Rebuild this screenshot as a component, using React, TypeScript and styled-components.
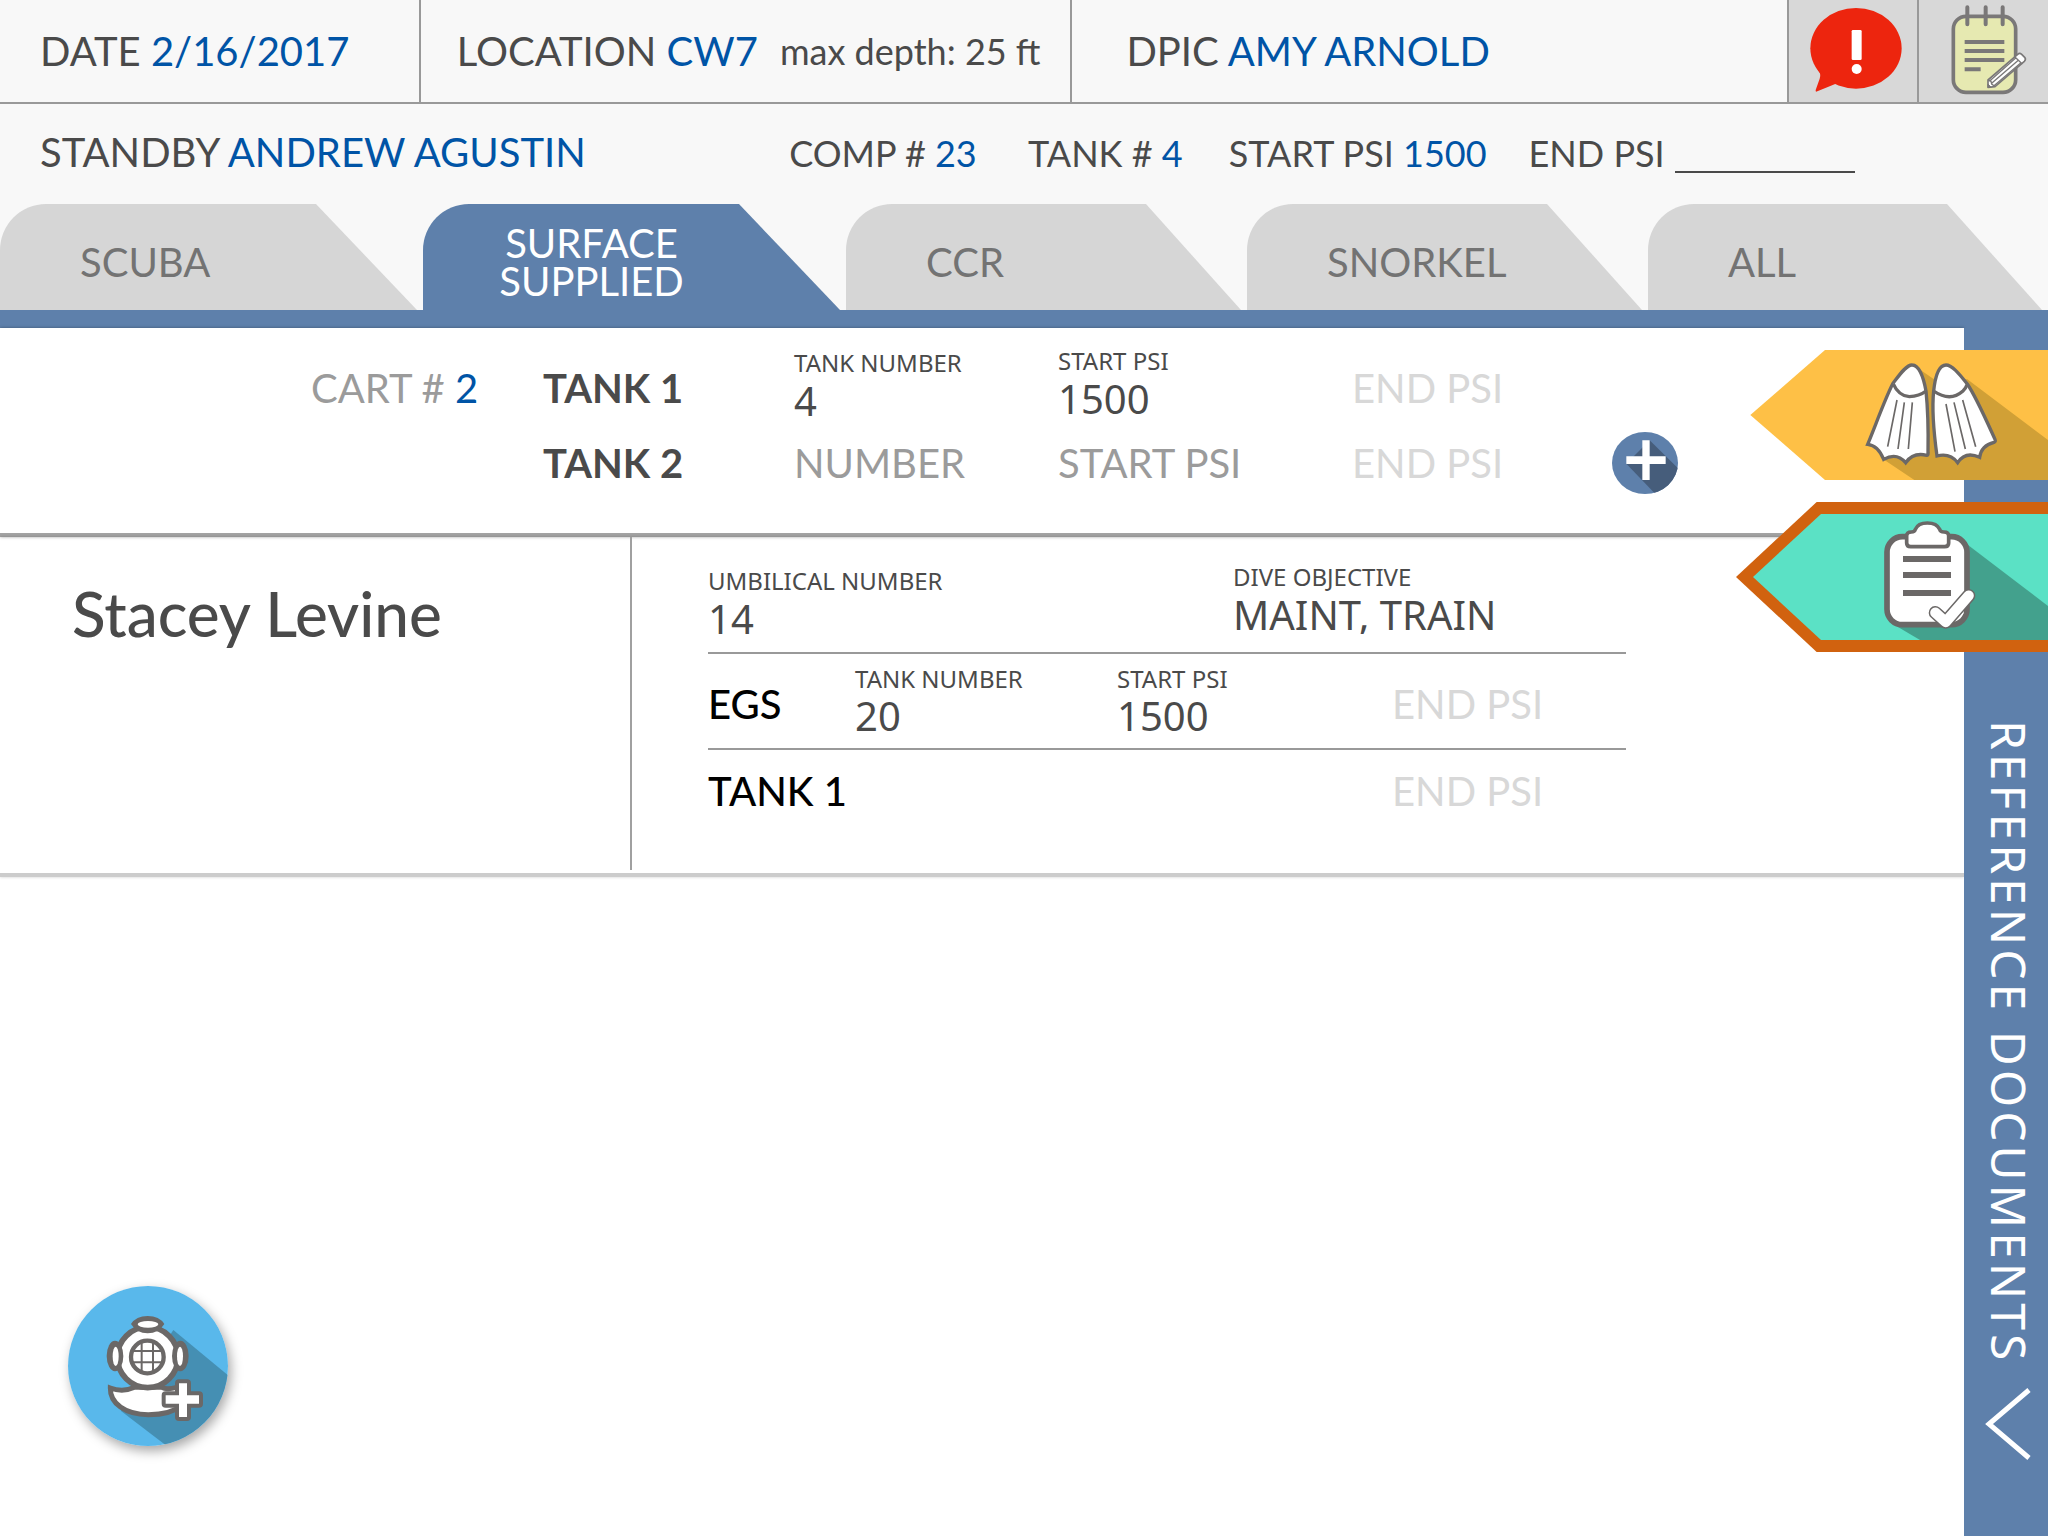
import React, { useState } from "react";
import styled, { createGlobalStyle, css } from "styled-components";

const color = {
  page: "#f8f8f8",
  text: "#4a4a4a",
  value: "#0054a6",
  muted: "#9b9b9b",
  faint: "#d8d8d8",
  line: "#999999",
  blue: "#5e80ab",
  tab: "#d6d6d6",
  tabText: "#737373",
  icon: "#6b6867",
};

const sans = `Lato, "Open Sans", sans-serif`;
const humanist = `"Noto Sans", "DejaVu Sans", sans-serif`;

const GlobalStyle = createGlobalStyle`
  *, *::before, *::after { box-sizing: border-box; }
  body { margin: 0; background: #ffffff; font-family: ${sans}; color: ${color.text}; }
  button { border: 0; padding: 0; background: none; font: inherit; color: inherit; cursor: pointer; }
  svg { display: block; }
`;

const Page = styled.div`
  display: flex;
  flex-direction: column;
  min-height: 100vh;
`;

/* ---------- header ---------- */

const Header = styled.header`
  background: ${color.page};
`;

const InfoRow = styled.div`
  display: grid;
  grid-template-columns: 421fr 652fr 717fr 128px 131px;
  height: 104px;
  border-bottom: 2px solid ${color.line};
`;

const InfoCell = styled.div<{ $indent: number }>`
  display: flex;
  align-items: center;
  gap: 22px;
  padding-left: ${(p) => p.$indent}px;
  border-right: 2px solid ${color.line};
  font-size: 40px;
  line-height: 48px;
  white-space: nowrap;
`;

const Value = styled.span`
  color: ${color.value};
`;

const Depth = styled.span`
  font-size: 36px;
`;

const IconCell = styled.button`
  background: ${color.faint};
  & + & {
    border-left: 2px solid ${color.line};
  }
`;

const StandbyRow = styled.div`
  display: grid;
  grid-template-columns: 750fr 239fr 201fr 300fr 520fr;
  align-items: baseline;
  height: 100px;
  padding: 24px 0 0 40px;
  font-size: 36px;
  line-height: 48px;
  white-space: nowrap;
`;

const Standby = styled.div`
  font-size: 40px;
`;

const EndPsiLabel = styled.label`
  display: flex;
  align-items: baseline;
  gap: 10px;
`;

const UnderlineInput = styled.input`
  width: 180px;
  height: 38px;
  padding: 0;
  border: 0;
  border-bottom: 2px solid ${color.text};
  background: none;
  font: inherit;
  line-height: 36px;
  color: ${color.value};
`;

/* ---------- tabs ---------- */

const TabBar = styled.nav`
  display: grid;
  grid-template-columns: 423fr 423fr 401fr 401fr 400fr;
  border-bottom: 18px solid ${color.blue};
`;

const Tab = styled.button<{ $active: boolean; $slant: number }>`
  height: 106px;
  margin-right: 6px;
  padding: 10px 0 0 80px;
  border-radius: 46px 0 0 0;
  clip-path: polygon(0 0, calc(100% - ${(p) => p.$slant}px) 0, 100% 100%, 0 100%);
  background: ${color.tab};
  color: ${color.tabText};
  font-size: 40px;
  line-height: 38px;
  text-align: left;
  ${(p) =>
    p.$active &&
    css`
      padding: 10px 120px 0 40px;
      background: ${color.blue};
      color: #ffffff;
      text-align: center;
    `}
`;

/* ---------- body ---------- */

const Body = styled.div`
  position: relative;
  display: flex;
  flex: 1;
`;

const Main = styled.main`
  display: flex;
  flex-direction: column;
  flex: 1;
  min-width: 0;
  background: #ffffff;
`;

const CartPanel = styled.section`
  display: flex;
  flex-direction: column;
  gap: 1px;
  padding: 23px 0 33px;
  border-bottom: 4px solid #a3a3a3;
  box-shadow: 0 0 3px rgba(0, 0, 0, 0.35);
`;

const CartRow = styled.div`
  display: grid;
  grid-template-columns: 311fr 232fr 251fr 264fr 294fr 260fr 352fr;
  grid-template-rows: 74px;
  align-items: center;
`;

const TankName = styled.strong`
  grid-column: 3;
  font-size: 40px;
  line-height: 48px;
  font-weight: 700;
  white-space: nowrap;
`;

const Cart = styled.span`
  grid-column: 2;
  font-size: 40px;
  line-height: 48px;
  color: ${color.muted};
  white-space: nowrap;
`;

const FieldBox = styled.label<{ $raised?: boolean }>`
  display: flex;
  flex-direction: column;
  gap: 5px;
  min-width: 0;
  padding-bottom: ${(p) => (p.$raised ? 9 : 5)}px;
  font-family: ${humanist};
  font-size: 24px;
  line-height: 24px;
  white-space: nowrap;
`;

const FieldInput = styled.input`
  width: 100%;
  height: 40px;
  padding: 0;
  border: 0;
  background: none;
  font-family: inherit;
  font-size: 40px;
  line-height: 40px;
  color: ${color.text};
`;

const EmptyInput = styled.input<{ $tone: string; $column?: number }>`
  grid-column: ${(p) => p.$column ?? "auto"};
  width: 100%;
  min-width: 0;
  height: 48px;
  padding: 0;
  border: 0;
  background: none;
  font-family: ${sans};
  font-size: 40px;
  color: ${color.text};
  &::placeholder {
    color: ${(p) => p.$tone};
    opacity: 1;
  }
`;

const RoundButton = styled.button`
  justify-self: start;
`;

const DiverPanel = styled.section`
  display: grid;
  grid-template-columns: 632fr 1332fr;
  padding-bottom: 3px;
  border-bottom: 4px solid #cccccc;
  box-shadow: 0 0 3px rgba(0, 0, 0, 0.2);
`;

const DiverName = styled.h2`
  margin: 0;
  padding: 40px 0 0 72px;
  border-right: 2px solid #a0a0a0;
  font-size: 62px;
  line-height: 72px;
  font-weight: 500;
`;

const DiverDetails = styled.div`
  padding: 0 338px 39px 76px;
`;

const ObjectiveRow = styled.div`
  display: grid;
  grid-template-columns: 525fr 393fr;
  align-items: end;
  height: 117px;
  padding-bottom: 9px;
  border-bottom: 2px solid ${color.line};
`;

const EgsRow = styled.div`
  display: grid;
  grid-template-columns: 147fr 262fr 275fr 234fr;
  align-items: center;
  height: 96px;
  padding-top: 5px;
  border-bottom: 2px solid ${color.line};
`;

const TankRow = styled(EgsRow)`
  height: 81px;
  padding-top: 0;
  border-bottom: 0;
`;

const RowTitle = styled.span`
  font-size: 40px;
  line-height: 48px;
  font-weight: 500;
  color: #000000;
  white-space: nowrap;
`;

const AddDiver = styled.button`
  align-self: flex-start;
  margin: auto 0 90px 68px;
  border-radius: 50%;
  box-shadow: 3px 5px 12px rgba(0, 0, 0, 0.35);
`;

/* ---------- right rail ---------- */

const Rail = styled.aside`
  display: flex;
  flex-direction: column;
  justify-content: flex-end;
  width: 84px;
  background: ${color.blue};
`;

const RailButton = styled.button`
  display: flex;
  flex-direction: column;
  align-items: center;
  gap: 22px;
  padding: 0 0 74px 6px;
  color: #ffffff;
`;

const RailText = styled.span`
  writing-mode: vertical-rl;
  font-family: ${humanist};
  font-size: 48px;
  line-height: 60px;
  letter-spacing: 4px;
  white-space: nowrap;
`;

const Flags = styled.nav`
  position: absolute;
  top: 22px;
  right: 0;
  display: flex;
  flex-direction: column;
  align-items: flex-end;
  gap: 22px;
`;

/* ---------- drawings ---------- */

const AlertIcon = () => (
  <svg width="126" height="102" viewBox="28 0 378 306" aria-hidden="true">
    <ellipse cx="229" cy="145" rx="137" ry="121" fill="#ed250e" />
    <path d="M112 205Q126 222 120 236L108 270Q107 277 113 274Q138 264 172 250Z" fill="#ed250e" />
    <rect x="216" y="90" width="30" height="90" rx="4" fill="#fff" />
    <circle cx="231" cy="207" r="15" fill="#fff" />
  </svg>
);

const NotesIcon = () => (
  <svg width="129" height="102" viewBox="418 0 387 306" aria-hidden="true">
    <g stroke="#7a7878" fill="none">
      <rect x="521" y="49" width="187" height="228" rx="38" strokeWidth="11" fill="#e6e9b1" />
      <path d="M563 22V73M618 22V73M669 22V73" strokeWidth="12" strokeLinecap="round" />
      <path d="M555 126H674M555 153H674M555 180H674M555 208H603" strokeWidth="12" />
      <path d="M625 262V240L714 163Q720 157 726 163L735 172Q740 178 734 184L646 260Z" strokeWidth="5" strokeLinejoin="round" fill="#fff" />
      <path d="M626 241L634 244L636 252L645 259M636 250L716 181M630 243L709 173M643 257L724 188M705 170L728 192" strokeWidth="4" />
      <path d="M625 262L634 262L625 252Z" strokeWidth="3" fill="#7a7878" />
    </g>
  </svg>
);

const PlusIcon = () => (
  <svg width="66" height="62" viewBox="66 36 198 186" aria-hidden="true">
    <clipPath id="plus-disc">
      <ellipse cx="165" cy="129" rx="99" ry="93" />
    </clipPath>
    <g clipPath="url(#plus-disc)">
      <rect x="66" y="36" width="198" height="186" fill={color.blue} />
      <path d="M179 61L264 145V222H196L109 131Z" fill="#465d7b" />
    </g>
    <path d="M157 61h22v48h48v23h-48v48h-22v-48h-48v-23h48z" fill="#fff" />
  </svg>
);

const FinsFlag = () => (
  <svg width="298" height="130" viewBox="90 60 894 390" aria-hidden="true">
    <path d="M315 60H984V450H315L91 255Z" fill="#fec046" />
    <path d="M596 116L642 148H742L984 330V450H583L490 388Z" fill="#d1a036" />
    <g stroke={color.icon} strokeWidth="10" fill="#fff">
      <path d="M577 105C560 103 538 135 519 160C496 204 466 288 443 343Q474 346 491 388Q530 366 557 398Q580 366 620 376Q625 376 624 368C625 310 624 240 618 183C612 150 600 107 577 105Z" />
      <path d="M519 160Q536 198 568 200Q598 199 618 183" />
      <path d="M678 105C655 105 645 145 641 183C635 240 643 320 651 378Q690 368 713 398Q736 362 779 382Q784 346 822 337Q828 335 825 328C803 280 768 200 742 162C720 135 697 105 678 105Z" />
      <path d="M641 183Q690 217 728 184Q738 174 742 162" />
      <path strokeWidth="5" fill="none" d="M531 210L503 350M553 217L534 357M577 217L565 357M678 222L705 365M702 217L736 357M728 210L767 350" />
    </g>
  </svg>
);

const ChecklistFlag = () => (
  <svg width="312" height="150" viewBox="48 516 936 450" aria-hidden="true">
    <path d="M290 516H984V966H290L48 741Z" fill="#d1620f" />
    <path d="M303 552H984V930H303L99 741Z" fill="#5be1c5" />
    <path d="M740 642L984 828V930H600L520 883Z" fill="#43a18d" />
    <g stroke={color.icon} fill="#fff">
      <rect x="501" y="620" width="240" height="264" rx="46" strokeWidth="17" />
      <path strokeWidth="11" d="M572 650Q560 650 560 639V618Q560 606 574 606Q584 606 586 598C591 586 605 579 622 579C640 579 654 587 659 598Q661 606 672 606Q686 606 686 618V639Q686 650 674 650Z" />
      <path strokeWidth="18" d="M549 687H693M549 735H693M549 789H693" />
      <g fill="none" strokeLinecap="round" strokeLinejoin="round">
        <path strokeWidth="40" d="M646 848L677 876L746 797" />
        <path stroke="#fff" strokeWidth="31" d="M646 848L677 876L746 797" />
        <path stroke="#fff" strokeWidth="3" d="M713 868Q724 860 729 850" />
      </g>
    </g>
  </svg>
);

const HelmetIcon = () => (
  <svg width="160" height="160" viewBox="54 48 480 480" aria-hidden="true">
    <clipPath id="helmet-disc">
      <circle cx="294" cy="288" r="240" />
    </clipPath>
    <clipPath id="helmet-window">
      <circle cx="292" cy="261" r="48" />
    </clipPath>
    <g clipPath="url(#helmet-disc)">
      <rect x="54" y="48" width="480" height="480" fill="#59b8eb" />
      <path d="M370 180L540 321V540H366L212 422Z" fill="#458fb3" />
    </g>
    <g stroke={color.icon} fill="#fff">
      <path strokeWidth="15" d="M181 354Q218 368 254 352H335Q350 360 380 352L400 404C372 426 335 434 295 434C225 434 180 400 181 354Z" />
      <circle cx="293" cy="262" r="91" strokeWidth="17" />
      <circle cx="292" cy="261" r="49" strokeWidth="13" />
      <path clipPath="url(#helmet-window)" strokeWidth="6" d="M275 205V315M309 205V315M240 243H345M240 277H345" />
    </g>
    <g fill={color.icon}>
      <path d="M243 162Q258 138 293 138Q328 138 343 162Q326 190 293 190Q260 190 243 162Z" />
      <ellipse cx="195" cy="258" rx="25" ry="46" />
      <ellipse cx="391" cy="258" rx="25" ry="46" />
    </g>
    <g fill="#fff">
      <ellipse cx="294" cy="163" rx="31" ry="10" />
      <ellipse cx="197" cy="259" rx="9" ry="29" />
      <ellipse cx="390" cy="259" rx="9" ry="29" />
    </g>
    <path
      d="M387 340h24v36h36v25h-36v40h-24v-40h-40v-25h40z"
      fill="#fff"
      stroke={color.icon}
      strokeWidth="24"
      strokeLinejoin="round"
      paintOrder="stroke"
    />
  </svg>
);

const Chevron = () => (
  <svg width="48" height="76" viewBox="0 0 48 76" fill="none" stroke="#fff" strokeWidth="5" aria-hidden="true">
    <path d="M44 4L4 38L44 72" />
  </svg>
);

/* ---------- app ---------- */

const Field = ({ label, value, raised }: { label: string; value: string; raised?: boolean }) => (
  <FieldBox $raised={raised}>
    {label}
    <FieldInput defaultValue={value} />
  </FieldBox>
);

const tabs = [
  { name: "SCUBA", slant: 101 },
  { name: "SURFACE SUPPLIED", slant: 101 },
  { name: "CCR", slant: 95 },
  { name: "SNORKEL", slant: 95 },
  { name: "ALL", slant: 95 },
];

export default function App() {
  const [active, setActive] = useState("SURFACE SUPPLIED");

  return (
    <Page>
      <GlobalStyle />
      <Header>
        <InfoRow>
          <InfoCell $indent={40}>
            <span>DATE <Value>2/16/2017</Value></span>
          </InfoCell>
          <InfoCell $indent={36}>
            <span>LOCATION <Value>CW7</Value></span>
            <Depth>max depth: 25 ft</Depth>
          </InfoCell>
          <InfoCell $indent={54}>
            <span>DPIC <Value>AMY ARNOLD</Value></span>
          </InfoCell>
          <IconCell aria-label="Alerts"><AlertIcon /></IconCell>
          <IconCell aria-label="Notes"><NotesIcon /></IconCell>
        </InfoRow>
        <StandbyRow>
          <Standby>STANDBY <Value>ANDREW AGUSTIN</Value></Standby>
          <span>COMP # <Value>23</Value></span>
          <span>TANK # <Value>4</Value></span>
          <span>START PSI <Value>1500</Value></span>
          <EndPsiLabel>END PSI<UnderlineInput /></EndPsiLabel>
        </StandbyRow>
        <TabBar>
          {tabs.map((tab) => (
            <Tab key={tab.name} $active={tab.name === active} $slant={tab.slant} onClick={() => setActive(tab.name)}>
              {tab.name}
            </Tab>
          ))}
        </TabBar>
      </Header>

      <Body>
        <Main>
          <CartPanel>
            <CartRow>
              <Cart>CART # <Value>2</Value></Cart>
              <TankName>TANK 1</TankName>
              <Field label="TANK NUMBER" value="4" />
              <Field label="START PSI" value="1500" raised />
              <EmptyInput $tone={color.faint} placeholder="END PSI" aria-label="Tank 1 end PSI" />
            </CartRow>
            <CartRow>
              <TankName>TANK 2</TankName>
              <EmptyInput $tone={color.muted} placeholder="NUMBER" aria-label="Tank 2 number" />
              <EmptyInput $tone={color.muted} placeholder="START PSI" aria-label="Tank 2 start PSI" />
              <EmptyInput $tone={color.faint} placeholder="END PSI" aria-label="Tank 2 end PSI" />
              <RoundButton aria-label="Add tank"><PlusIcon /></RoundButton>
            </CartRow>
          </CartPanel>

          <DiverPanel>
            <DiverName>Stacey Levine</DiverName>
            <DiverDetails>
              <ObjectiveRow>
                <Field label="UMBILICAL NUMBER" value="14" />
                <Field label="DIVE OBJECTIVE" value="MAINT, TRAIN" raised />
              </ObjectiveRow>
              <EgsRow>
                <RowTitle>EGS</RowTitle>
                <Field label="TANK NUMBER" value="20" />
                <Field label="START PSI" value="1500" />
                <EmptyInput $tone={color.faint} placeholder="END PSI" aria-label="EGS end PSI" />
              </EgsRow>
              <TankRow>
                <RowTitle>TANK 1</RowTitle>
                <EmptyInput $tone={color.faint} $column={4} placeholder="END PSI" aria-label="Diver tank 1 end PSI" />
              </TankRow>
            </DiverDetails>
          </DiverPanel>

          <AddDiver aria-label="Add diver"><HelmetIcon /></AddDiver>
        </Main>

        <Rail>
          <RailButton>
            <RailText>REFERENCE DOCUMENTS</RailText>
            <Chevron />
          </RailButton>
        </Rail>

        <Flags>
          <button aria-label="Equipment"><FinsFlag /></button>
          <button aria-label="Checklist"><ChecklistFlag /></button>
        </Flags>
      </Body>
    </Page>
  );
}
